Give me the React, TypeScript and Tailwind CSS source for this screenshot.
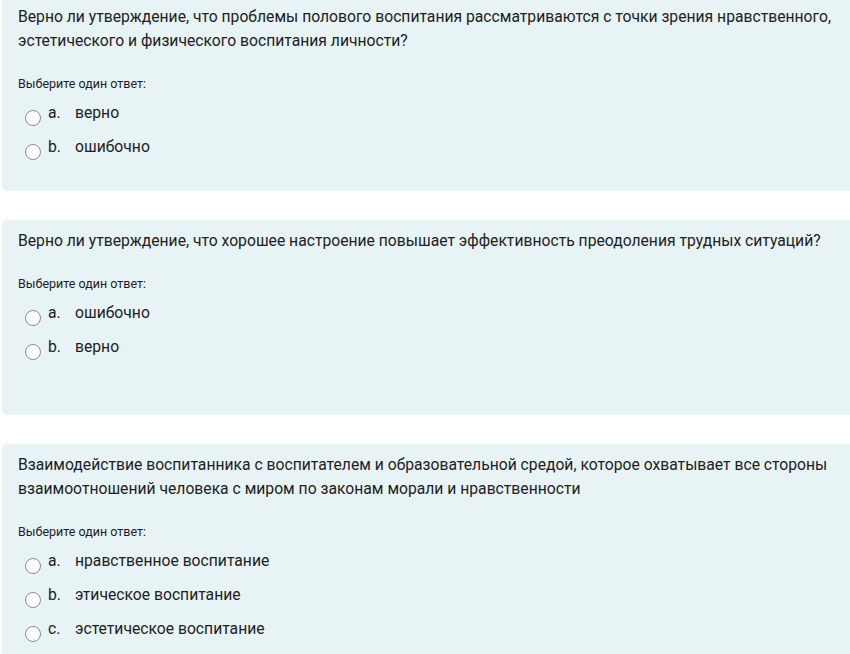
import React from 'react';

type Question = {
  text: string;
  options: { letter: string; label: string }[];
};

const QUESTIONS: Question[] = [
  {
    text: 'Верно ли утверждение, что проблемы полового воспитания рассматриваются с точки зрения нравственного, эстетического и физического воспитания личности?',
    options: [
      { letter: 'a.', label: 'верно' },
      { letter: 'b.', label: 'ошибочно' },
    ],
  },
  {
    text: 'Верно ли утверждение, что хорошее настроение повышает эффективность преодоления трудных ситуаций?',
    options: [
      { letter: 'a.', label: 'ошибочно' },
      { letter: 'b.', label: 'верно' },
    ],
  },
  {
    text: 'Взаимодействие воспитанника с воспитателем и образовательной средой, которое охватывает все стороны взаимоотношений человека с миром по законам морали и нравственности',
    options: [
      { letter: 'a.', label: 'нравственное воспитание' },
      { letter: 'b.', label: 'этическое воспитание' },
      { letter: 'c.', label: 'эстетическое воспитание' },
    ],
  },
];

const QuestionCard: React.FC<{ q: Question }> = ({ q }) => (
  <div className="w-[880px] min-h-[195px] shrink-0 rounded-[5px] bg-[#e7f3f5] pl-4 pt-[9px] pb-4">
    <p className="w-[822px] text-[15.7px] leading-6 text-[#1d2125]">{q.text}</p>
    <p className="mt-[22px] text-[12.5px] leading-[18px] text-[#1d2125]">Выберите один ответ:</p>
    <div className="mt-[3px] flex flex-col">
      {q.options.map((o) => (
        <label key={o.letter} className="flex h-[34px] items-center pl-[7px] text-[15.7px] text-[#1d2125]">
          <span className="mt-[9px] h-[16px] w-[16px] shrink-0 rounded-full border border-[#8a8a8a] bg-white" />
          <span className="ml-[7px] w-[27px]">{o.letter}</span>
          <span>{o.label}</span>
        </label>
      ))}
    </div>
  </div>
);

export default function App() {
  return (
    <div className="h-[654px] w-[850px] overflow-hidden bg-white font-['Roboto',sans-serif]">
      <div className="-mt-[4px] flex flex-col gap-[29px] pl-[2px]">
        {QUESTIONS.map((q, i) => (
          <QuestionCard key={i} q={q} />
        ))}
      </div>
    </div>
  );
}
